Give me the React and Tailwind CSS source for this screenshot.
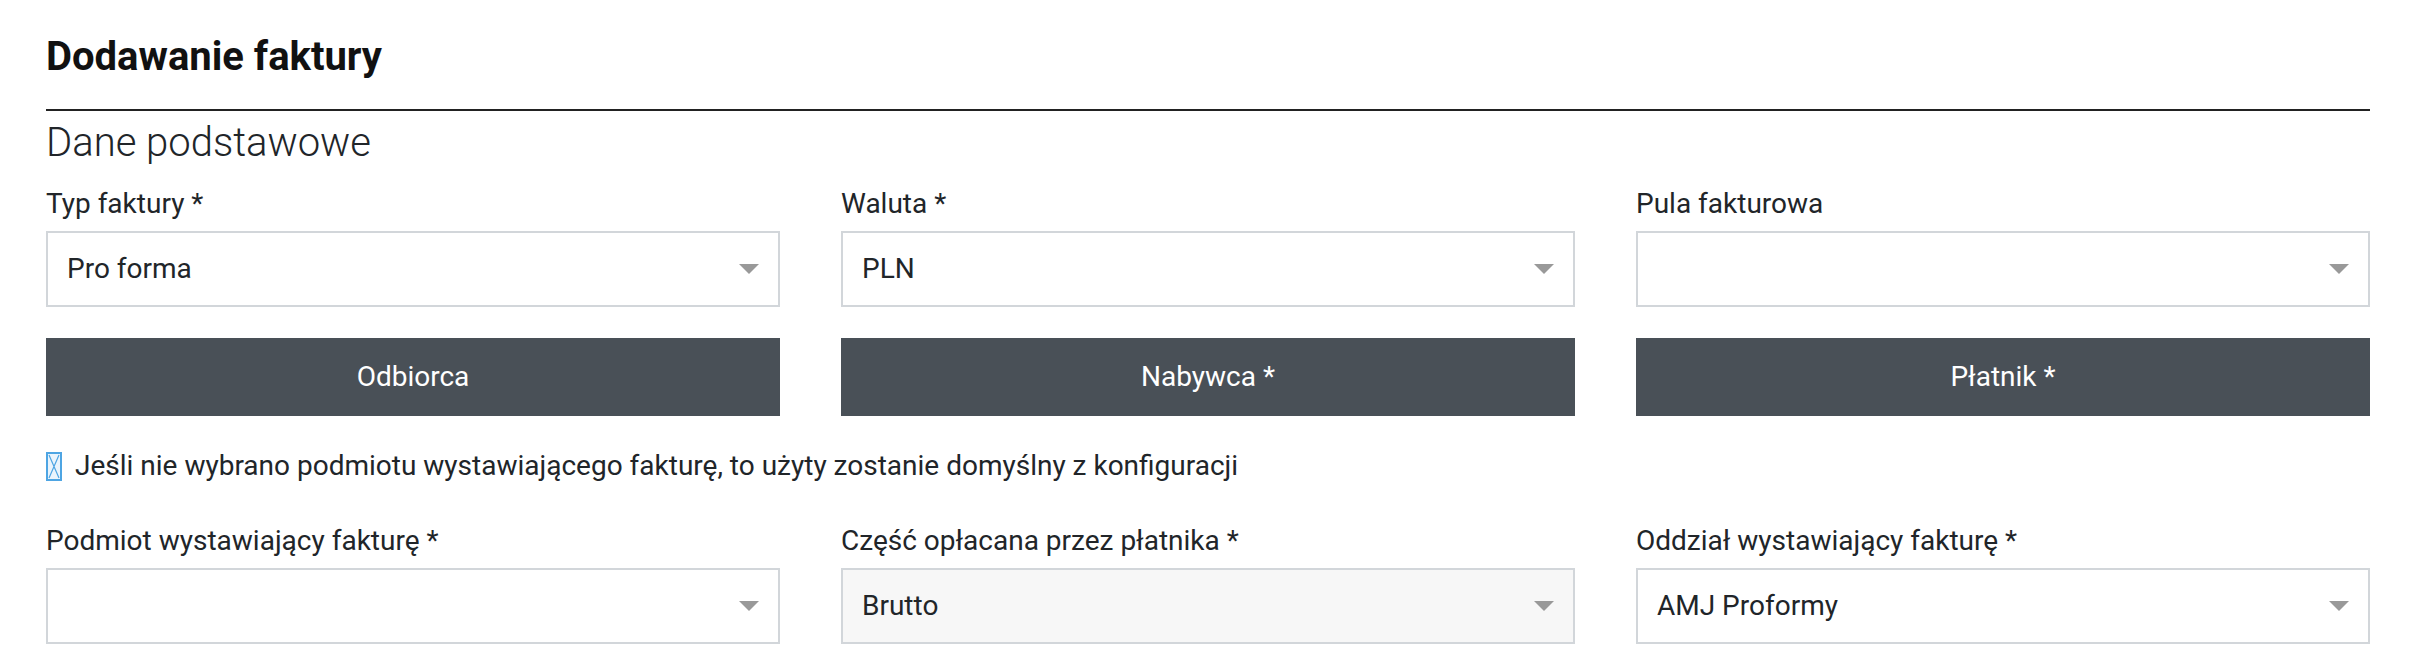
import React from 'react';

const Caret = () => (
  <svg width="20" height="10" viewBox="0 0 20 10" className="shrink-0">
    <path d="M0 0h20L10 10z" fill="#999999" />
  </svg>
);

// placeholder glyph the font-icon falls back to
const MissingIcon = () => (
  <svg width="16" height="29" viewBox="0 0 16 29" className="shrink-0">
    <rect x="1" y="1" width="14" height="27" fill="#eaf4fc" stroke="#4ea5e3" strokeWidth="2" />
    <path d="M3 3L13 26M13 3L3 26" stroke="#4ea5e3" strokeWidth="1.2" fill="none" />
  </svg>
);

const Field = ({ label, value, disabled }) => (
  <div>
    <div className="text-[28px] leading-[32px] text-[#212529]">{label}</div>
    <div
      className={`mt-[11px] h-[76px] border-2 border-[#d2d6da] flex items-center justify-between pl-[19px] pr-[19px] ${
        disabled ? 'bg-[#f7f7f7]' : 'bg-white'
      }`}
    >
      <span className="text-[28px] leading-[32px] text-[#212529]">{value}</span>
      <Caret />
    </div>
  </div>
);

const PartyButton = ({ children }) => (
  <button className="h-[78px] w-full bg-[#495057] text-white text-[28px] font-normal flex items-center justify-center">
    {children}
  </button>
);

export default function App() {
  return (
    <div className="min-h-[666px] bg-white pl-[46px] pr-[40px] pt-[33px] font-[Roboto,sans-serif] text-[#212529]">
      <h1 className="text-[40px] leading-[47px] font-bold text-[#111111]">Dodawanie faktury</h1>
      <div className="mt-[29px] h-[2px] bg-[#222222]" />
      <h2 className="mt-[9px] text-[40px] leading-[46px] font-light">Dane podstawowe</h2>

      {/* Pierwszy wiersz */}
      <div className="mt-[22px] grid grid-cols-3 gap-x-[61px]">
        <Field label="Typ faktury *" value="Pro forma" />
        <Field label="Waluta *" value="PLN" />
        <Field label="Pula fakturowa" value="" />
      </div>

      <div className="mt-[31px] grid grid-cols-3 gap-x-[61px]">
        <PartyButton>Odbiorca</PartyButton>
        <PartyButton>Nabywca *</PartyButton>
        <PartyButton>Płatnik *</PartyButton>
      </div>

      <div className="mt-[34px] flex items-center gap-[13px] text-[28px] leading-[32px]">
        <MissingIcon />
        <span>Jeśli nie wybrano podmiotu wystawiającego fakturę, to użyty zostanie domyślny z konfiguracji</span>
      </div>

      <div className="mt-[43px] grid grid-cols-3 gap-x-[61px]">
        <Field label="Podmiot wystawiający fakturę *" value="" />
        <Field label="Część opłacana przez płatnika *" value="Brutto" disabled />
        <Field label="Oddział wystawiający fakturę *" value="AMJ Proformy" />
      </div>
    </div>
  );
}
